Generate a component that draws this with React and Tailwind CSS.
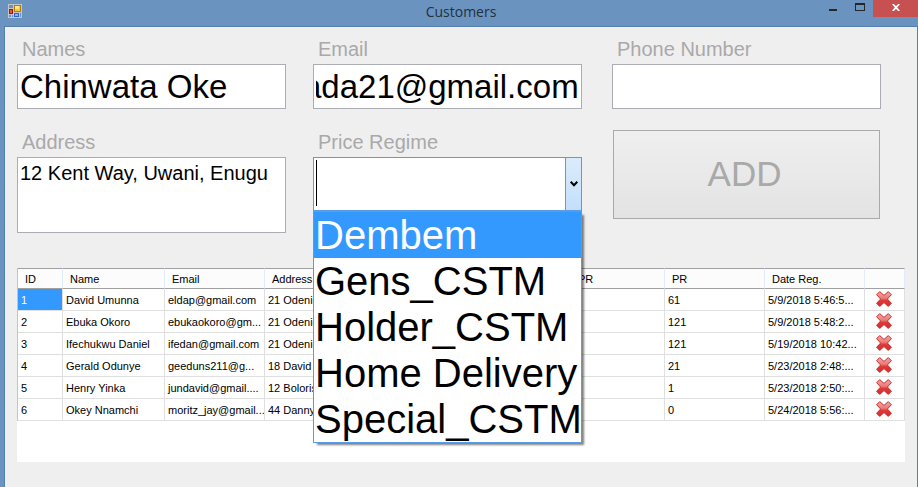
import { useState, useEffect, useRef } from "react"

const regimes = ["Dembem", "Gens_CSTM", "Holder_CSTM", "Home Delivery", "Special_CSTM"]

const customers = [
  { id: 1, name: "David Umunna", email: "eldap@gmail.com", address: "21 Odenig", pr: 61, date: "5/9/2018 5:46:5..." },
  { id: 2, name: "Ebuka Okoro", email: "ebukaokoro@gm...", address: "21 Odenig", pr: 121, date: "5/9/2018 5:48:2..." },
  { id: 3, name: "Ifechukwu Daniel", email: "ifedan@gmail.com", address: "21 Odenig", pr: 121, date: "5/19/2018 10:42..." },
  { id: 4, name: "Gerald Odunye", email: "geeduns211@g...", address: "18 David", pr: 21, date: "5/23/2018 2:48:..." },
  { id: 5, name: "Henry Yinka", email: "jundavid@gmail....", address: "12 Boloris", pr: 1, date: "5/23/2018 2:50:..." },
  { id: 6, name: "Okey Nnamchi", email: "moritz_jay@gmail...", address: "44 Danny", pr: 0, date: "5/24/2018 5:56:..." },
]

const labelClass = "block pl-[5px] mb-1 text-[20px] leading-[22px] text-[#a9a9a9]"
const inputClass =
  "block w-full h-[45px] px-[2px] bg-white border border-[#abadb3] text-[33px] text-black outline-none"
const thClass =
  "h-[21px] pl-[7px] text-left font-normal whitespace-nowrap bg-[#fcfcfc] border-y border-y-[#a0a0a0] border-r border-r-[#e0ebff]"
const tdClass = "h-[22px] pl-[3px] whitespace-nowrap overflow-hidden border-b border-r border-[#dfdfdf]"

function FormIcon() {
  return (
    <svg width="14" height="14" viewBox="0 0 14 14" shapeRendering="crispEdges" aria-hidden="true">
      <rect width="14" height="14" fill="#c3c6c9" />
      <rect x="1" y="1" width="4" height="3" fill="#6b93bf" />
      <rect x="1" y="11" width="2" height="2" fill="#6b93bf" />
      <rect x="4" y="11" width="1" height="2" fill="#6b93bf" />
      <rect x="12" y="9" width="1" height="4" fill="#6b93bf" />
      <rect x="6" y="1" width="7" height="7" fill="#b07d10" />
      <rect x="7" y="2" width="5" height="5" fill="#fbc92f" />
      <rect x="7" y="2" width="4" height="3" fill="#ffe680" />
      <rect x="1" y="5" width="4" height="5" fill="#9c1414" />
      <rect x="2" y="6" width="2" height="3" fill="#e05548" />
      <rect x="6" y="9" width="5" height="4" fill="#3565c8" />
      <rect x="7" y="10" width="3" height="2" fill="#86b0fa" />
    </svg>
  )
}

function DeleteIcon() {
  return (
    <svg width="16" height="16" viewBox="0 0 16 16" aria-hidden="true">
      <defs>
        <linearGradient id="cross" x1="0" y1="0" x2="0" y2="1">
          <stop offset="0" stopColor="#f4a9a7" />
          <stop offset="0.45" stopColor="#ea7a78" />
          <stop offset="0.6" stopColor="#dd3a38" />
          <stop offset="1" stopColor="#d92b2b" />
        </linearGradient>
      </defs>
      <path
        d="M3.7 .6 8 4.4 12.3 .6 15.4 3.7 11.4 8 15.4 12.3 12.3 15.4 8 11.6 3.7 15.4 .6 12.3 4.6 8 .6 3.7Z"
        fill="url(#cross)"
        stroke="#c2302f"
        strokeWidth="1"
        strokeLinejoin="round"
      />
    </svg>
  )
}

function TitleBar() {
  return (
    <header className="grid grid-cols-[1fr_auto_1fr] h-[26px] bg-[#6a94bf]">
      <div className="pl-2 pt-1">
        <FormIcon />
      </div>
      <h1 className="pl-1 font-['Open_Sans','Noto_Sans',sans-serif] text-[14px] leading-6 text-[#25303c]">
        Customers
      </h1>
      <div className="flex items-start justify-end">
        <button type="button" aria-label="Minimize" className="flex justify-center w-[27px] h-[17px] pt-[9px]">
          <span className="block w-2 h-[2px] bg-[#262626]" />
        </button>
        <button type="button" aria-label="Maximize" className="flex justify-center w-[27px] h-[17px] pt-[3px]">
          <span className="block w-[10px] h-2 border border-t-2 border-[#262626]" />
        </button>
        <button type="button" aria-label="Close" className="flex justify-center w-[45px] h-[17px] pt-1 bg-[#c75050]">
          <svg width="8" height="7" viewBox="0 0 8 7" aria-hidden="true">
            <path d="M.8 0 7.2 7M7.2 0 .8 7" stroke="#fff" strokeWidth="1.8" />
          </svg>
        </button>
      </div>
    </header>
  )
}

function RegimeSelect() {
  const [open, setOpen] = useState(true)
  const [regime, setRegime] = useState("")

  const pick = (value) => {
    setRegime(value)
    setOpen(false)
  }

  return (
    <div className="relative">
      <div className="relative flex h-[54px] bg-white border border-[#569de5]">
        <select
          id="regime"
          value={regime}
          onChange={(e) => pick(e.target.value)}
          onMouseDown={(e) => {
            e.preventDefault()
            setOpen(!open)
          }}
          className="flex-1 min-w-0 appearance-none pl-[2px] bg-white text-[40px] text-black outline-none"
        >
          <option value=""></option>
          {regimes.map((r) => (
            <option key={r} value={r}>{r}</option>
          ))}
        </select>
        <span className="flex items-center justify-center w-4 border-l border-[#569de5] bg-linear-to-b from-[#dbebfc] to-[#c4dffb]">
          <svg width="8" height="6" viewBox="0 0 8 6" aria-hidden="true">
            <path d="M.7 .8 4 4.3 7.3 .8" fill="none" stroke="#000" strokeWidth="2" />
          </svg>
        </span>
        {/* text cursor */}
        {!regime && <span className="absolute left-[2px] top-[2px] w-px h-[46px] bg-black" />}
      </div>
      {open && (
        <div
          role="listbox"
          aria-label="Price Regime"
          className="absolute z-10 top-full inset-x-0 bg-white border border-[#569de5] shadow-[3px_3px_2px_-1px_rgba(0,0,0,0.5)]"
        >
          {regimes.map((r, i) => (
            <button
              key={r}
              type="button"
              role="option"
              aria-selected={i === 0}
              onClick={() => pick(r)}
              className={`block w-full h-[46px] pl-px text-left text-[40px] leading-[46px] whitespace-nowrap ${
                i === 0 ? "bg-[#3399ff] text-white" : "text-black"
              }`}
            >
              {r}
            </button>
          ))}
        </div>
      )}
    </div>
  )
}

function CustomerTable() {
  return (
    <div className="mt-[35px] h-[194px] bg-white">
      <table className="w-full table-fixed border-separate border-spacing-0 border-l border-[#c4c4c4] text-[11px] leading-4 text-black">
        <colgroup>
          <col className="w-[45px]" />
          <col className="w-[102px]" />
          <col className="w-[100px]" />
          <col className="w-[100px]" />
          <col className="w-[100px]" />
          <col className="w-[100px]" />
          <col className="w-[100px]" />
          <col className="w-[100px]" />
          <col className="w-[100px]" />
          <col className="w-[40px]" />
        </colgroup>
        <thead>
          <tr>
            <th className={thClass}>ID</th>
            <th className={thClass}>Name</th>
            <th className={thClass}>Email</th>
            <th className={thClass}>Address</th>
            <th className={thClass}></th>
            <th className={thClass}></th>
            <th className={`${thClass} pl-[13px]`}>PR</th>
            <th className={thClass}>PR</th>
            <th className={thClass}>Date Reg.</th>
            <th className={thClass}></th>
          </tr>
        </thead>
        <tbody>
          {customers.map((c, i) => (
            <tr key={c.id}>
              <td className={`${tdClass} ${i === 0 ? "bg-[#3399ff] text-white" : ""}`}>{c.id}</td>
              <td className={tdClass}>{c.name}</td>
              <td className={tdClass}>{c.email}</td>
              <td className={tdClass}>{c.address}</td>
              <td className={tdClass}></td>
              <td className={tdClass}></td>
              <td className={tdClass}></td>
              <td className={tdClass}>{c.pr}</td>
              <td className={tdClass}>{c.date}</td>
              <td className="h-[22px] pt-[2px] pr-[2px] align-top border-b border-r border-[#dfdfdf]">
                <button type="button" aria-label={`Delete ${c.name}`} className="block mx-auto">
                  <DeleteIcon />
                </button>
              </td>
            </tr>
          ))}
        </tbody>
      </table>
    </div>
  )
}

export default function App() {
  const emailRef = useRef(null)

  // keep the end of a long address in view
  useEffect(() => {
    emailRef.current.scrollLeft = emailRef.current.scrollWidth
  }, [])

  return (
    <div className="flex flex-col min-h-screen bg-[#6a94bf] font-['Liberation_Sans',Arial,sans-serif]">
      <TitleBar />
      <main className="flex-1 ml-1 px-3 pt-[11px] bg-[#efefef] border-t border-x border-[#5480b0]">
        <form className="flex items-start mr-6" onSubmit={(e) => e.preventDefault()}>
          <div className="flex-1 min-w-0 mr-[27px]">
            <label htmlFor="names" className={labelClass}>Names</label>
            <input id="names" type="text" defaultValue="Chinwata Oke" className={inputClass} />
            <label htmlFor="address" className={`${labelClass} mt-[22px]`}>Address</label>
            <textarea
              id="address"
              defaultValue="12 Kent Way, Uwani, Enugu"
              className="block w-full h-[76px] px-[2px] pt-[3px] resize-none bg-white border border-[#abadb3] text-[20px] leading-6 text-black outline-none"
            />
          </div>
          <div className="flex-1 min-w-0 mr-[30px]">
            <label htmlFor="email" className={labelClass}>Email</label>
            <input id="email" ref={emailRef} type="text" defaultValue="ada21@gmail.com" className={inputClass} />
            <label htmlFor="regime" className={`${labelClass} mt-[22px]`}>Price Regime</label>
            <RegimeSelect />
          </div>
          <div className="flex-1 min-w-0">
            <label htmlFor="phone" className={labelClass}>Phone Number</label>
            <input id="phone" type="text" className={inputClass} />
            <div className="px-px mt-[21px]">
              <button
                type="submit"
                className="block w-full h-[89px] pr-1 border border-[#a9a9a9] bg-linear-to-b from-[#efefef] to-[#e3e3e3] text-[35px] text-[#a9a9a9]"
              >
                ADD
              </button>
            </div>
          </div>
        </form>
        <CustomerTable />
      </main>
    </div>
  )
}
